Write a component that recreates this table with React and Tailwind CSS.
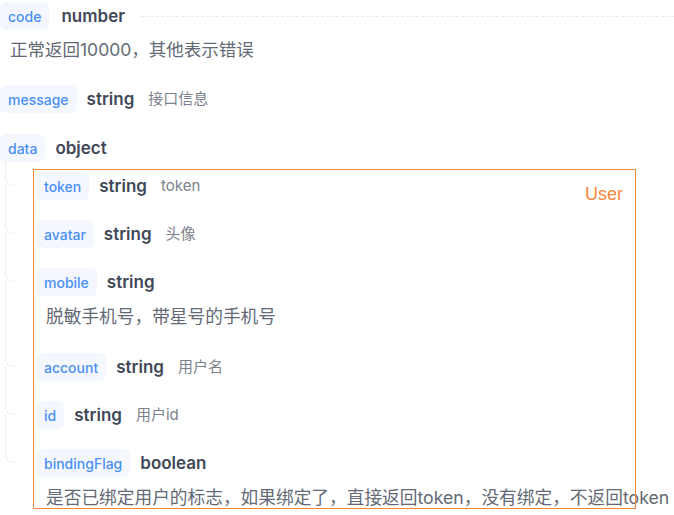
const font = { fontFamily: 'Inter, "Noto Sans CJK SC", sans-serif' }

function Field({ name, type, note, desc, line }) {
  return (
    <div className="relative">
      {line}
      <div className="flex items-center h-7">
        <span className="h-7 px-2 flex items-center rounded-md bg-[#f4f8fe] text-[14px] font-medium text-[#4a8ff5]">
          {name}
        </span>
        <span className="ml-2.5 pt-0.5 text-[17px] font-semibold text-[#414857]">{type}</span>
        {note && <span className="ml-3.5 text-[15px] leading-5 text-[#7c818b]">{note}</span>}
      </div>
      {desc && (
        <div className="mt-[9px] mb-1 pl-2.5 leading-6 text-[17.7px] text-[#646a75] whitespace-nowrap">{desc}</div>
      )}
    </div>
  )
}

const children = [
  { name: 'token', type: 'string', note: 'token' },
  { name: 'avatar', type: 'string', note: '头像' },
  { name: 'mobile', type: 'string', desc: '脱敏手机号，带星号的手机号' },
  { name: 'account', type: 'string', note: '用户名' },
  { name: 'id', type: 'string', note: '用户id' },
  {
    name: 'bindingFlag',
    type: 'boolean',
    desc: '是否已绑定用户的标志，如果绑定了，直接返回token，没有绑定，不返回token',
  },
]

export default function App() {
  return (
    <div className="relative w-[674px] h-[515px] overflow-hidden bg-white pt-0.5" style={font}>
      <div className="flex flex-col gap-[21px]">
        <div className="relative">
          <div className="flex items-center h-7">
            <span className="h-7 px-2 flex items-center rounded-md bg-[#f4f8fe] text-[14px] font-medium text-[#4a8ff5]">
              code
            </span>
            <span className="ml-3 pt-0.5 text-[17px] font-semibold text-[#414857]">number</span>
            <div className="flex-1 ml-4 border-t border-dashed border-[#e9ebee]" />
          </div>
          <div className="mt-2 mb-0.5 pl-2.5 leading-6 text-[17.5px] text-[#646a75]">正常返回10000，其他表示错误</div>
        </div>

        <Field name="message" type="string" note="接口信息" />

        <div>
          <Field name="data" type="object" />
          <div className="mt-2.5 ml-9 flex flex-col gap-5">
            {children.map((c, i) => (
              <Field
                key={c.name}
                {...c}
                line={
                  <>
                    <div
                      className={
                        'absolute left-[-31px] w-[10px] border-l border-b border-[#ededed] rounded-bl-lg ' +
                        (i === 0 ? 'top-[-10px] h-[24px]' : 'top-[-20px] h-[34px]')
                      }
                    />
                    {i < children.length - 1 && (
                      <div className="absolute left-[-31px] top-[14px] bottom-[-20px] border-l border-[#ededed]" />
                    )}
                  </>
                }
              />
            ))}
          </div>
        </div>
      </div>

      {/* highlighted group overlay */}
      <div className="absolute left-[33px] top-[169px] w-[603px] h-[340px] border border-[#f5883c] pointer-events-none">
        <span
          className="absolute right-[12px] top-[11px] text-[18px] text-[#f5883c]"
          style={{ fontFamily: '"Liberation Sans", Arial, sans-serif' }}
        >
          User
        </span>
      </div>
    </div>
  )
}
